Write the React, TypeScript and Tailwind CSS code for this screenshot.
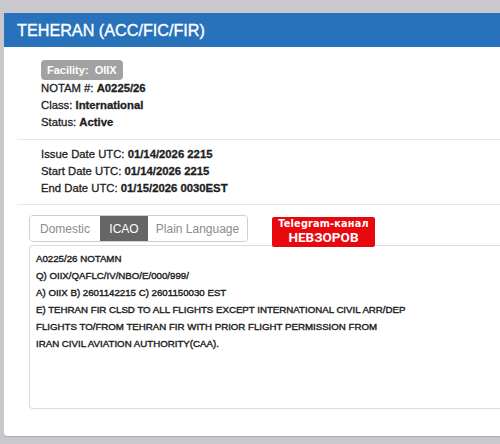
import { useState } from "react";

const notamLines = [
  "A0225/26 NOTAMN",
  "Q) OIIX/QAFLC/IV/NBO/E/000/999/",
  "A) OIIX B) 2601142215 C) 2601150030 EST",
  "E) TEHRAN FIR CLSD TO ALL FLIGHTS EXCEPT INTERNATIONAL CIVIL ARR/DEP",
  "FLIGHTS TO/FROM TEHRAN FIR WITH PRIOR FLIGHT PERMISSION FROM",
  "IRAN CIVIL AVIATION AUTHORITY(CAA).",
];

const tabs = [
  { name: "Domestic", w: "w-[70px]" },
  { name: "ICAO", w: "w-[48px]" },
  { name: "Plain Language", w: "w-[99px]" },
];

function Field({ label, value }: { label: string; value: string }) {
  return (
    <div className="h-[17px] leading-[17px] [-webkit-text-stroke:0.3px_#1e1e1e]">
      <span>{label} </span>
      <span className="font-bold">{value}</span>
    </div>
  );
}

export default function App() {
  const [tab, setTab] = useState("ICAO");

  return (
    <div
      className="w-[500px] h-[444px] overflow-hidden bg-[#c9c8cd] pt-[13px] pl-[4px] text-[#1e1e1e]"
      style={{ fontFamily: '"Liberation Sans", Arial, sans-serif' }}
    >
      <div className="h-[423px] bg-white rounded-bl-[3px] shadow-[0_1px_1px_rgba(0,0,0,0.15)]">
        {/* header bar */}
        <div className="h-[34px] bg-[#2872bb] pl-[13px] flex items-center">
          <h1 className="text-[16.2px] text-white leading-none pt-[1px] [-webkit-text-stroke:0.35px_#ffffff]">
            TEHERAN (ACC/FIC/FIR)
          </h1>
        </div>

        <div className="pl-[13px]">
          <div className="pl-[24px] pt-[13px] pb-[8px] text-[11.3px]">
            <span className="inline-flex items-center h-[20px] px-[6px] rounded-[4px] bg-[#a2a2a2] text-white text-[11px] font-bold">
              Facility:&nbsp; OIIX
            </span>
            <div>
              <Field label="NOTAM #:" value="A0225/26" />
              <Field label="Class:" value="International" />
              <Field label="Status:" value="Active" />
            </div>
          </div>

          <div className="border-t border-[#e6e6e6]" />

          <div className="pl-[24px] pt-[6px] pb-[7px] text-[11.3px]">
            <Field label="Issue Date UTC:" value="01/14/2026 2215" />
            <Field label="Start Date UTC:" value="01/14/2026 2215" />
            <Field label="End Date UTC:" value="01/15/2026 0030EST" />
          </div>

          <div className="border-t border-[#e6e6e6]" />

          <div className="relative pl-[12px] pt-[10px]">
            <div className="inline-flex h-[27px] border border-[#cfcfcf] rounded-[4px] overflow-hidden text-[12px]">
              {tabs.map((t) => (
                <button
                  key={t.name}
                  onClick={() => setTab(t.name)}
                  className={
                    t.name === tab
                      ? `${t.w} bg-[#666666] text-white`
                      : `${t.w} bg-white text-[#8c8c8c]`
                  }
                >
                  {t.name}
                </button>
              ))}
            </div>

            <div className="mt-[3px] h-[164px] border border-[#dcdcdc] border-r-0 rounded-l-[4px] pl-[6px] pt-[4px] text-[9.7px] [-webkit-text-stroke:0.4px_#1e1e1e]">
              {notamLines.map((line) => (
                <div key={line} className="h-[17px] leading-[17px] whitespace-nowrap">
                  {line}
                </div>
              ))}
            </div>

            {/* channel watermark */}
            <div className="absolute left-[255px] top-[12px] w-[103px] h-[30px] bg-[#e9080d] rounded-[2px] flex flex-col items-center justify-center text-white font-bold leading-none">
              <span className="text-[9.7px] tracking-[0.2px]" style={{ fontFamily: '"DejaVu Sans", sans-serif' }}>
                Telegram-канал
              </span>
              <span className="text-[13.5px] mt-[2px]" style={{ fontFamily: 'Roboto, sans-serif' }}>
                НЕВЗОРОВ
              </span>
            </div>
          </div>
        </div>
      </div>
    </div>
  );
}
